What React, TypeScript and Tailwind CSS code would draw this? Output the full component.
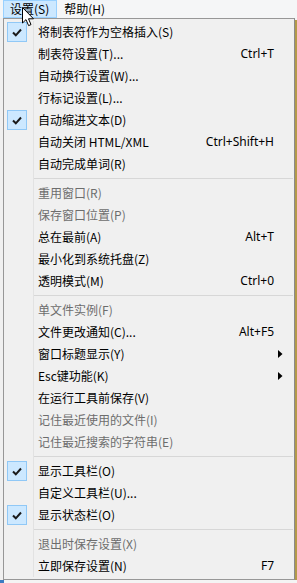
import React from "react";

type Item =
  | { sep: true }
  | {
      sep?: false;
      label: string;
      shortcut?: string;
      checked?: boolean;
      disabled?: boolean;
      submenu?: boolean;
    };

const items: Item[] = [
  { label: "将制表符作为空格插入(S)", checked: true },
  { label: "制表符设置(T)...", shortcut: "Ctrl+T" },
  { label: "自动换行设置(W)..." },
  { label: "行标记设置(L)..." },
  { label: "自动缩进文本(D)", checked: true },
  { label: "自动关闭 HTML/XML", shortcut: "Ctrl+Shift+H" },
  { label: "自动完成单词(R)" },
  { sep: true },
  { label: "重用窗口(R)", disabled: true },
  { label: "保存窗口位置(P)", disabled: true },
  { label: "总在最前(A)", shortcut: "Alt+T" },
  { label: "最小化到系统托盘(Z)" },
  { label: "透明模式(M)", shortcut: "Ctrl+0" },
  { sep: true },
  { label: "单文件实例(F)", disabled: true },
  { label: "文件更改通知(C)...", shortcut: "Alt+F5" },
  { label: "窗口标题显示(Y)", submenu: true },
  { label: "Esc键功能(K)", submenu: true },
  { label: "在运行工具前保存(V)" },
  { label: "记住最近使用的文件(I)", disabled: true },
  { label: "记住最近搜索的字符串(E)", disabled: true },
  { sep: true },
  { label: "显示工具栏(O)", checked: true },
  { label: "自定义工具栏(U)..." },
  { label: "显示状态栏(O)", checked: true },
  { sep: true },
  { label: "退出时保存设置(X)", disabled: true },
  { label: "立即保存设置(N)", shortcut: "F7" },
];

function Check() {
  return (
    <svg width="10" height="9" viewBox="0 0 10 9">
      <path d="M1 4.5 L3.8 7.3 L9 1.5" fill="none" stroke="#1a1a1a" strokeWidth="2" />
    </svg>
  );
}

function Cursor() {
  return (
    <svg
      className="absolute left-[22px] top-[7px]"
      width="13"
      height="20"
      viewBox="0 0 13 20"
    >
      <path
        d="M0.5 0.5 L0.5 16 L4 12.6 L6.6 18.6 L9 17.6 L6.5 11.8 L11.5 11.8 Z"
        fill="#fff"
        stroke="#000"
        strokeWidth="1"
        strokeLinejoin="miter"
      />
    </svg>
  );
}

export default function App() {
  return (
    <div
      className="relative h-[583px] w-[297px] overflow-hidden bg-[#f4f4f4] text-[12px] text-black"
      style={{ fontFamily: '"Noto Sans CJK SC", "Noto Sans", sans-serif' }}
    >
      {/* menu bar */}
      <div className="flex h-[18px] items-stretch bg-[#f5f6f7] pl-[3px]">
        <div className="flex items-center border border-[#99d1ff] bg-[#cce8ff] pl-[6px] pr-[7px] leading-none">
          设置(S)
        </div>
        <div className="flex items-center pl-[7px] leading-none">帮助(H)</div>
      </div>

      <div className="flex">
        <div className="w-[3px] bg-[#f0f0f0]" />
        {/* dropdown */}
        <div className="w-[292px] border border-[#979797] border-r-[#8a8a8a] bg-[#f0f0f0] py-[2px]">
          {items.map((it, i) =>
            it.sep ? (
              <div key={i} className="flex h-[7px] items-center">
                <div className="h-full w-[29px]" />
                <div className="h-full w-px bg-[#e2e2e2]" />
                <div className="h-px flex-1 bg-[#d7d7d7] mr-[1px]" />
              </div>
            ) : (
              <div key={i} className="flex h-[22px] items-center">
                <div className="flex h-full w-[29px] items-center pl-[3px]">
                  {it.checked && (
                    <div className="flex h-[20px] w-[20px] items-center justify-center border border-[#90c8f6] bg-[#cce8ff]">
                      <Check />
                    </div>
                  )}
                </div>
                <div className="h-full w-px bg-[#e2e2e2]" />
                <div
                  className={
                    "flex flex-1 items-center pl-[4px] pr-[20px] leading-none " +
                    (it.disabled ? "text-[#6d6d6d]" : "text-black")
                  }
                >
                  <span className="flex-1 whitespace-nowrap">{it.label}</span>
                  {it.shortcut && (
                    <span
                      className="whitespace-nowrap text-[12px]"
                      style={{ fontFamily: '"Noto Sans", sans-serif' }}
                    >
                      {it.shortcut}
                    </span>
                  )}
                  {it.submenu && (
                    <svg className="mr-[-9px]" width="5" height="8" viewBox="0 0 5 8">
                      <path d="M0 0 L4.5 4 L0 8 Z" fill="#000" />
                    </svg>
                  )}
                </div>
              </div>
            )
          )}
        </div>
        <div className="mt-[2px] w-[2px] bg-[#b39a4a]" />
      </div>
      <div className="h-[5px] w-[4px] bg-[#3b7bc2]" />

      <Cursor />
    </div>
  );
}
